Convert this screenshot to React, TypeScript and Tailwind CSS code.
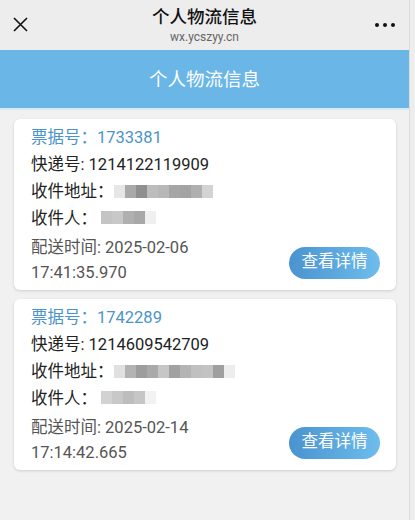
const records = [
  {
    id: "1733381",
    express: "1214122119909",
    addr: ["#e6e6e6", "#a9a9a9", "#8f8f8f", "#bdbdbd", "#b8b8b8", "#a6a6a6", "#a3a3a3", "#b0b0b0", "#d3d3d3"],
    name: ["#c4c4c4", "#c8c8c8", "#b0b0b0", "#a8a8a8", "#f0f0f0"],
    date: "2025-02-06",
    time: "17:41:35.970",
  },
  {
    id: "1742289",
    express: "1214609542709",
    addr: ["#e0e0e0", "#b3b3b3", "#9d9d9d", "#a9a9a9", "#c6c6c6", "#a1a1a1", "#b4b4b4", "#c0c0c0", "#c3c3c3", "#9f9f9f", "#ededed"],
    name: ["#d2d2d2", "#c8c8c8", "#bdbdbd", "#c6c6c6", "#f2f2f2"],
    date: "2025-02-14",
    time: "17:14:42.665",
  },
];

function Blur({ colors }: { colors: string[] }) {
  return (
    <span className="inline-flex h-[13px] items-stretch blur-[0.6px]">
      {colors.map((c, i) => (
        <span key={i} className="w-[11px]" style={{ backgroundColor: c }} />
      ))}
    </span>
  );
}

function Card({ r }: { r: (typeof records)[number] }) {
  return (
    <div className="rounded-[6px] bg-white pb-[5px] pl-[17px] pr-[16px] pt-[5px] text-[16.5px] shadow-[0_1px_3px_rgba(0,0,0,0.15)]">
      <p className="leading-[27px] text-[#4b94c9]">票据号：{r.id}</p>
      <p className="leading-[27px] text-[#222]">快递号: {r.express}</p>
      <p className="flex items-center leading-[27px] text-[#222]">
        收件地址：
        <Blur colors={r.addr} />
      </p>
      <p className="flex items-center leading-[27px] text-[#222]">
        收件人：
        <span className="ml-[4px]">
          <Blur colors={r.name} />
        </span>
      </p>
      <div className="flex items-center justify-between pt-[3px]">
        <div className="leading-[25px] text-[#555]">
          <p>配送时间: {r.date}</p>
          <p>{r.time}</p>
        </div>
        <button className="mt-[5px] h-[32px] w-[91px] rounded-full bg-gradient-to-r from-[#4a93cf] to-[#6ebdec] text-[16.5px] text-white">
          查看详情
        </button>
      </div>
    </div>
  );
}

export default function App() {
  return (
    <div
      className="flex h-[520px] w-[415px] overflow-hidden bg-[#ededed]"
      style={{ fontFamily: 'Roboto, "Noto Sans CJK SC", sans-serif' }}
    >
      <div className="flex w-[410px] flex-col border-r border-[#dcdcdc] bg-[#f1f1f1]">
        <header className="relative flex h-[50px] flex-col items-center bg-[#ededed]">
          <svg className="absolute left-[13px] top-[17px]" width="15" height="15" viewBox="0 0 15 15">
            <path d="M1 1L14 14M14 1L1 14" stroke="#111" strokeWidth="1.6" />
          </svg>
          <div className="absolute right-[14px] top-[23px] flex gap-[4px]">
            <span className="h-[4px] w-[4px] rounded-full bg-[#111]" />
            <span className="h-[4px] w-[4px] rounded-full bg-[#111]" />
            <span className="h-[4px] w-[4px] rounded-full bg-[#111]" />
          </div>
          <h1 className="mt-[6px] text-[17.5px] font-medium leading-[22px] text-[#111]">个人物流信息</h1>
          <p className="mt-[2px] text-[12px] leading-[14px] text-[#666]">wx.ycszyy.cn</p>
        </header>
        <div className="flex h-[60px] items-center justify-center border-b-2 border-[#d6e9f7] bg-[#69b6e7] pt-[4px] text-[18.5px] text-white">
          个人物流信息
        </div>
        <div className="flex flex-col gap-[9px] pl-[14px] pr-[13px] pt-[9px]">
          {records.map((r) => (
            <Card key={r.id} r={r} />
          ))}
        </div>
      </div>
    </div>
  );
}
